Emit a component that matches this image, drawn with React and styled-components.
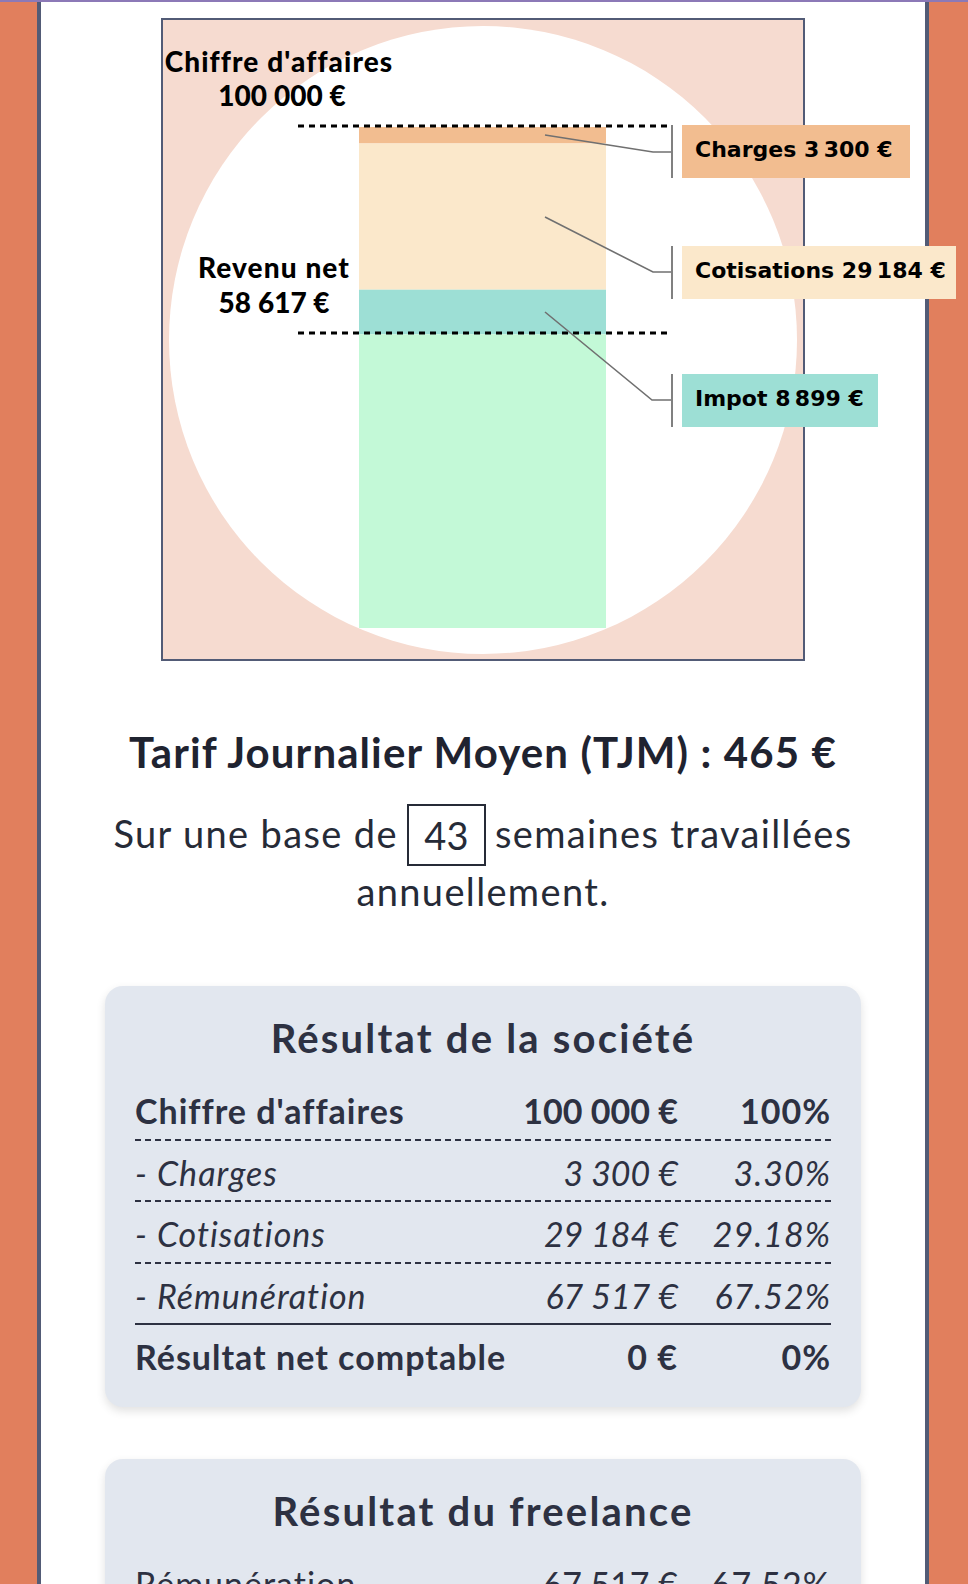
import React from 'react';
import styled, { createGlobalStyle } from 'styled-components';

const NNBSP = '\u202f';

const GlobalStyle = createGlobalStyle`
  html, body {
    margin: 0;
    padding: 0;
  }
  body {
    background: #e17f5d;
    font-family: Lato, 'Noto Sans', sans-serif;
  }
`;

const societe = [
  { label: "Chiffre d'affaires", amount: `100${NNBSP}000\u00a0€`, pct: '100%', kind: 'bold', line: 'dashed' },
  { label: '- Charges', amount: `3${NNBSP}300\u00a0€`, pct: '3.30%', kind: 'italic', line: 'dashed' },
  { label: '- Cotisations', amount: `29${NNBSP}184\u00a0€`, pct: '29.18%', kind: 'italic', line: 'dashed' },
  { label: '- Rémunération', amount: `67${NNBSP}517\u00a0€`, pct: '67.52%', kind: 'italic', line: 'solid' },
  { label: 'Résultat net comptable', amount: '0\u00a0€', pct: '0%', kind: 'bold', line: 'none' },
];

const freelance = [
  { label: 'Rémunération', amount: `67${NNBSP}517\u00a0€`, pct: '67.52%', kind: 'plain', line: 'dashed' },
  { label: '- Impot', amount: `8${NNBSP}899\u00a0€`, pct: '8.90%', kind: 'italic', line: 'solid' },
  { label: 'Revenu net', amount: `58${NNBSP}617\u00a0€`, pct: '58.62%', kind: 'bold', line: 'none' },
];

const callouts = [
  { label: `Charges 3${NNBSP}300 €`, fill: '#f2bd90', y: 105, w: 228, from: [382, 115], to: [490, 132] },
  { label: `Cotisations 29${NNBSP}184 €`, fill: '#fbe8cb', y: 226, w: 274, from: [382, 197], to: [490, 252] },
  { label: `Impot 8${NNBSP}899 €`, fill: '#9ddfd5', y: 354, w: 196, from: [382, 292], to: [489, 380] },
];

function Chart()
{
  return (
    <ChartFrame>
      <svg width="640" height="639" viewBox="0 0 640 639" overflow="visible">
        <circle cx="320" cy="320" r="314" fill="#fff" />
        <rect x="196" y="107" width="247" height="16.5" fill="#f2bd90" />
        <rect x="196" y="123.5" width="247" height="146.2" fill="#fbe8cb" />
        <rect x="196" y="269.7" width="247" height="44.6" fill="#9ddfd5" />
        <rect x="196" y="314.3" width="247" height="293.7" fill="#c3f9d7" />

        <line x1="135" x2="504" y1="106" y2="106" stroke="#000" strokeWidth="3" strokeDasharray="6 5" />
        <line x1="135" x2="504" y1="313" y2="313" stroke="#000" strokeWidth="3" strokeDasharray="6 5" />

        <ChartLabel x="116" y="52">Chiffre d'affaires</ChartLabel>
        <ChartLabel x="119" y="86">{`100${NNBSP}000 €`}</ChartLabel>
        <ChartLabel x="111" y="258">Revenu net</ChartLabel>
        <ChartLabel x="111" y="293">{`58${NNBSP}617 €`}</ChartLabel>

        {callouts.map((c) => (
          <g key={c.label}>
            <polyline
              points={`${c.from[0]},${c.from[1]} ${c.to[0]},${c.to[1]} 509,${c.to[1]}`}
              fill="none"
              stroke="#707070"
              strokeWidth="1.6"
            />
            <line x1="509" x2="509" y1={c.y} y2={c.y + 53} stroke="#808080" strokeWidth="2" />
            <rect x="519" y={c.y} width={c.w} height="53" fill={c.fill} />
            <CalloutText x="532" y={c.y + 32}>{c.label}</CalloutText>
          </g>
        ))}
      </svg>
    </ChartFrame>
  );
}

function ResultCard({ title, rows })
{
  return (
    <Card>
      <CardTitle>{title}</CardTitle>
      {rows.map((r) => (
        <Row key={r.label} $kind={r.kind} $line={r.line}>
          <span>{r.label}</span>
          <Amount>{r.amount}</Amount>
          <Amount>{r.pct}</Amount>
        </Row>
      ))}
    </Card>
  );
}

export default function App()
{
  return (
    <>
      <GlobalStyle />
      <Page>
        <Column>
          <Chart />
          <Title>Tarif Journalier Moyen (TJM) : 465 €</Title>
          <Intro>
            Sur une base de <WeeksInput type="text" defaultValue="43" /> semaines travaillées annuellement.
          </Intro>
          <ResultCard title="Résultat de la société" rows={societe} />
          <ResultCard title="Résultat du freelance" rows={freelance} />
        </Column>
      </Page>
    </>
  );
}

const Page = styled.div`
  border-top: 2px solid #8c79b7;
  height: 1582px;
  overflow: hidden;
`;

const Column = styled.main`
  width: 892px;
  margin-left: 37px;
  border-left: 4px solid #525b76;
  border-right: 4px solid #525b76;
  background: #fff;
  padding: 16px 0 40px;
  display: flex;
  flex-direction: column;
  align-items: center;
  min-height: 100%;
  box-sizing: border-box;
`;

const ChartFrame = styled.div`
  width: 640px;
  height: 639px;
  border: 2px solid #525b76;
  background: #f6dbd0;

  svg {
    display: block;
    overflow: visible;
  }
`;

const ChartLabel = styled.text`
  font-family: Lato, sans-serif;
  font-weight: 900;
  font-size: 28px;
  letter-spacing: 1.1px;
  fill: #000;
  text-anchor: middle;
`;

const CalloutText = styled.text`
  font-family: 'DejaVu Sans', sans-serif;
  font-weight: 700;
  font-size: 22px;
  fill: #000;
`;

const Title = styled.h2`
  margin: 65px 0 0;
  font-size: 42px;
  line-height: 52px;
  font-weight: 700;
  letter-spacing: 1.1px;
  color: #1f2330;
  text-align: center;
`;

const Intro = styled.p`
  margin: 26px 0 0;
  max-width: 790px;
  font-size: 38px;
  line-height: 58px;
  letter-spacing: 1.35px;
  color: #262b37;
  text-align: center;
`;

const WeeksInput = styled.input`
  box-sizing: border-box;
  width: 79px;
  height: 62px;
  margin: -4px -2px;
  padding: 0;
  border: 2px solid #262b37;
  border-radius: 0;
  background: #fff;
  font: inherit;
  letter-spacing: 0;
  color: inherit;
  text-align: center;
  vertical-align: -2px;
`;

const Card = styled.section`
  width: 756px;
  box-sizing: border-box;
  margin-top: 66px;
  padding: 28.5px 30px 20.5px;
  background: #e2e7ef;
  border-radius: 18px;
  box-shadow: 0 4px 10px rgba(0, 0, 0, 0.12);
  color: #2d3142;

  & + & {
    margin-top: 52px;
  }
`;

const CardTitle = styled.h3`
  margin: 0 0 18.5px;
  font-size: 40px;
  line-height: 46px;
  font-weight: 700;
  letter-spacing: 2.2px;
  text-align: center;
`;

const lineStyles = {
  dashed: `
    background-image: linear-gradient(to right, #2d3142 60%, transparent 60%);
    background-size: 10px 2px;
    background-repeat: repeat-x;
    background-position: left bottom;
  `,
  solid: `
    background: linear-gradient(#2d3142, #2d3142) left bottom / 100% 2px no-repeat;
  `,
  none: '',
};

const Row = styled.div`
  display: grid;
  grid-template-columns: 1fr auto 153px;
  align-items: baseline;
  height: 61.5px;
  box-sizing: border-box;
  padding-top: 12px;
  font-size: 34px;
  line-height: 40px;
  letter-spacing: 1px;
  font-weight: ${(p) => (p.$kind === 'bold' ? 700 : 400)};
  font-style: ${(p) => (p.$kind === 'italic' ? 'italic' : 'normal')};
  ${(p) => lineStyles[p.$line]}
`;

const Amount = styled.span`
  text-align: right;
  white-space: nowrap;
`;
